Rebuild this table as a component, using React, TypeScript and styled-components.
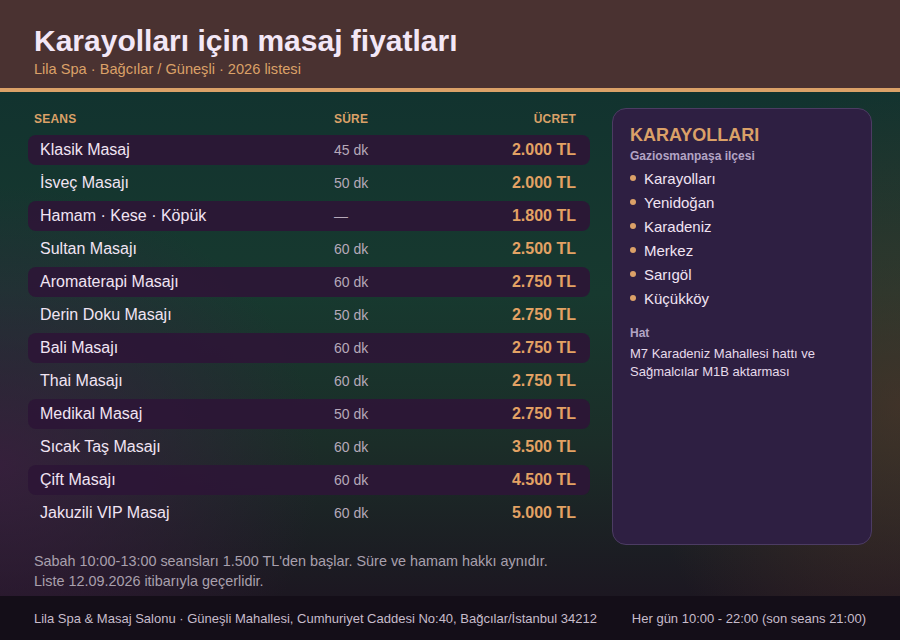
import styled, { createGlobalStyle } from 'styled-components';

const GlobalStyle = createGlobalStyle`
  html, body {
    margin: 0;
    padding: 0;
    background: #140e18;
  }
  body {
    font-family: "Liberation Sans", Arial, sans-serif;
  }
`;

interface Service {
  name: string;
  duration: string;
  price: string;
}

const services: Service[] = [
  { name: 'Klasik Masaj', duration: '45 dk', price: '2.000 TL' },
  { name: 'İsveç Masajı', duration: '50 dk', price: '2.000 TL' },
  { name: 'Hamam · Kese · Köpük', duration: '—', price: '1.800 TL' },
  { name: 'Sultan Masajı', duration: '60 dk', price: '2.500 TL' },
  { name: 'Aromaterapi Masajı', duration: '60 dk', price: '2.750 TL' },
  { name: 'Derin Doku Masajı', duration: '50 dk', price: '2.750 TL' },
  { name: 'Bali Masajı', duration: '60 dk', price: '2.750 TL' },
  { name: 'Thai Masajı', duration: '60 dk', price: '2.750 TL' },
  { name: 'Medikal Masaj', duration: '50 dk', price: '2.750 TL' },
  { name: 'Sıcak Taş Masajı', duration: '60 dk', price: '3.500 TL' },
  { name: 'Çift Masajı', duration: '60 dk', price: '4.500 TL' },
  { name: 'Jakuzili VIP Masaj', duration: '60 dk', price: '5.000 TL' },
];

const neighbourhoods = ['Karayolları', 'Yenidoğan', 'Karadeniz', 'Merkez', 'Sarıgöl', 'Küçükköy'];

export default function App() {
  return (
    <Page>
      <GlobalStyle />
      <Header>
        <Title>Karayolları için masaj fiyatları</Title>
        <Subtitle>Lila Spa · Bağcılar / Güneşli · 2026 listesi</Subtitle>
      </Header>
      <Main>
        <Content>
          <Table>
            <HeadRow>
              <HeadCell>Seans</HeadCell>
              <HeadCell>Süre</HeadCell>
              <HeadCell align="right">Ücret</HeadCell>
            </HeadRow>
            {services.map((s, i) => (
              <Row key={s.name} striped={i % 2 === 0}>
                <Name>{s.name}</Name>
                <Duration>{s.duration}</Duration>
                <Price>{s.price}</Price>
              </Row>
            ))}
          </Table>
          <Side>
            <SideTitle>Karayolları</SideTitle>
            <SideSub>Gaziosmanpaşa ilçesi</SideSub>
            <List>
              {neighbourhoods.map((n) => (
                <Item key={n}>{n}</Item>
              ))}
            </List>
            <SideLabel>Hat</SideLabel>
            <SideText>
              M7 Karadeniz Mahallesi hattı ve
              <br />
              Sağmalcılar M1B aktarması
            </SideText>
          </Side>
        </Content>
        <Note>
          Sabah 10:00-13:00 seansları 1.500 TL'den başlar. Süre ve hamam hakkı aynıdır.
          <br />
          Liste 12.09.2026 itibarıyla geçerlidir.
        </Note>
      </Main>
      <Footer>
        <span>Lila Spa &amp; Masaj Salonu · Güneşli Mahallesi, Cumhuriyet Caddesi No:40, Bağcılar/İstanbul 34212</span>
        <span>Her gün 10:00 - 22:00 (son seans 21:00)</span>
      </Footer>
    </Page>
  );
}

const Page = styled.div`
  width: 900px;
  height: 640px;
  display: flex;
  flex-direction: column;
  overflow: hidden;
`;

const Header = styled.header`
  height: 92px;
  box-sizing: border-box;
  padding: 24px 34px 0;
  background: #4a3231;
  border-bottom: 4px solid #dba168;
`;

const Title = styled.h1`
  margin: 0;
  font-size: 30px;
  line-height: 33px;
  font-weight: 700;
  color: #f3e7f6;
`;

const Subtitle = styled.div`
  margin-top: 3px;
  font-size: 14.6px;
  line-height: 18px;
  color: #dba168;
`;

const Main = styled.main`
  flex: 1;
  display: flex;
  flex-direction: column;
  padding: 16px 28px 0;
  background:
    radial-gradient(ellipse 320px 280px at 0% 74%, rgba(62, 28, 66, 0.75), transparent 100%),
    radial-gradient(ellipse 260px 320px at 100% 62%, rgba(88, 52, 40, 0.6), transparent 100%),
    linear-gradient(180deg, #12332f 0%, #17392f 40%, #1b2d28 70%, #1c1721 100%);
`;

const Content = styled.div`
  display: grid;
  grid-template-columns: 562px 260px;
  column-gap: 22px;
`;

const Table = styled.div`
  display: flex;
  flex-direction: column;
  gap: 3px;
`;

const HeadRow = styled.div`
  display: grid;
  grid-template-columns: 300px 1fr 120px;
  padding: 0 14px 0 6px;
  height: 21px;
  margin-bottom: 3px;
  align-items: center;
`;

const HeadCell = styled.div<{ align?: 'right' }>`
  font-size: 12px;
  font-weight: 700;
  letter-spacing: 0.2px;
  text-transform: uppercase;
  color: #dba168;
  text-align: ${({ align }) => align ?? 'left'};
`;

const Row = styled.div<{ striped: boolean }>`
  display: grid;
  grid-template-columns: 294px 1fr 120px;
  align-items: center;
  height: 30px;
  padding: 0 14px 0 12px;
  border-radius: 8px;
  background: ${({ striped }) => (striped ? 'rgba(44, 22, 54, 0.92)' : 'transparent')};
`;

const Name = styled.div`
  font-size: 16px;
  color: #f1e4f3;
`;

const Duration = styled.div`
  font-size: 14px;
  color: #b6a9b9;
`;

const Price = styled.div`
  font-size: 16px;
  font-weight: 700;
  color: #e3a264;
  text-align: right;
`;

const Side = styled.aside`
  height: 437px;
  box-sizing: border-box;
  padding: 16px 17px;
  background: #2e1f42;
  border: 1px solid #4c3c63;
  border-radius: 14px;
`;

const SideTitle = styled.div`
  font-size: 18px;
  font-weight: 700;
  text-transform: uppercase;
  color: #dba168;
  line-height: 20px;
`;

const SideSub = styled.div`
  margin-top: 4px;
  font-size: 12px;
  font-weight: 700;
  color: #b3a4c4;
`;

const List = styled.ul`
  list-style: none;
  margin: 3px 0 0;
  padding: 0;
`;

const Item = styled.li`
  display: flex;
  align-items: center;
  gap: 8px;
  height: 24px;
  font-size: 15px;
  color: #f1e4f3;

  &::before {
    content: '';
    width: 6px;
    height: 6px;
    border-radius: 50%;
    background: #dba168;
  }
`;

const SideLabel = styled.div`
  margin-top: 16px;
  font-size: 12px;
  font-weight: 700;
  color: #b3a4c4;
`;

const SideText = styled.div`
  margin-top: 5px;
  font-size: 13px;
  line-height: 18px;
  color: #e6daea;
`;

const Note = styled.p`
  margin: 6px 0 0 6px;
  font-size: 14.4px;
  line-height: 20px;
  color: #a9a0ad;
`;

const Footer = styled.footer`
  height: 44px;
  display: flex;
  align-items: center;
  justify-content: space-between;
  padding: 0 34px;
  background: #140e18;
  font-size: 13px;
  color: #c7bccb;
`;
